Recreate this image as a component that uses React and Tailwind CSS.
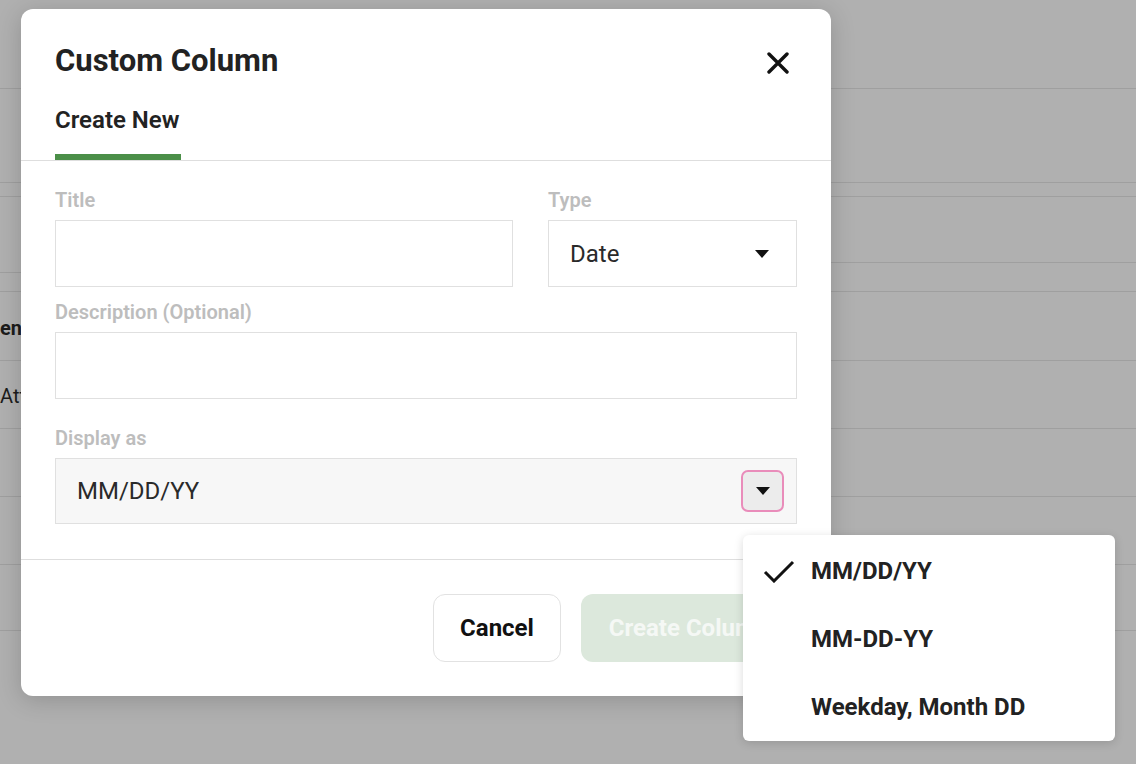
import React, { useState } from 'react'

const font = { fontFamily: 'Roboto, "Liberation Sans", sans-serif' }

function Caret() {
  return (
    <svg width="14" height="8" viewBox="0 0 14 8" className="shrink-0">
      <path d="M0 0h14L7 8z" fill="#111" />
    </svg>
  )
}

function Field({ label, children, className = '' }) {
  return (
    <div className={'flex flex-col ' + className}>
      <div className="h-[20px] mb-[10px] text-[20px] leading-[20px] font-semibold text-[#bdbdbd] whitespace-nowrap">{label}</div>
      {children}
    </div>
  )
}

const options = ['MM/DD/YY', 'MM-DD-YY', 'Weekday, Month DD']

export default function App() {
  const [format, setFormat] = useState('MM/DD/YY')
  const [open, setOpen] = useState(true)

  const leftRows = [89, 94, 14, 76, 19, 69, 68, 68, 68, 66]
  const rightRows = [89, 94, 14, 66, 29, 69, 68, 68, 68, 66]

  return (
    <div className="relative w-[1136px] h-[764px] overflow-hidden bg-[#b0b0b0]" style={font}>
      {/* dimmed page behind */}
      <div className="flex h-full">
        <div className="w-[21px] flex flex-col">
          {leftRows.map((h, i) => (
            <div key={i} style={{ height: h }} className="border-b border-[#9f9f9f] flex items-center whitespace-nowrap text-[20px] text-[#1c1c1c] pt-[3px]">
              {i === 5 && <span className="font-bold pl-[0px]">end</span>}
              {i === 6 && <span className="pl-[0px]">Att</span>}
            </div>
          ))}
        </div>
        <div className="flex-1 flex flex-col">
          {rightRows.map((h, i) => (
            <div key={i} style={{ height: h }} className="border-b border-[#9f9f9f]" />
          ))}
        </div>
      </div>

      {/* modal */}
      <div className="absolute left-[21px] top-[9px] w-[810px] h-[687px] bg-white rounded-[12px] shadow-[0_4px_24px_rgba(0,0,0,0.18)] flex flex-col">
        <div className="px-[34px] pt-[34px] flex items-center justify-between">
          <h2 className="text-[31px] leading-[36px] font-bold text-[#222]">Custom Column</h2>
          <button className="w-[22px] h-[22px] mr-[8px] mt-[4px]">
            <svg width="22" height="22" viewBox="0 0 22 22">
              <path d="M2 2L20 20M20 2L2 20" stroke="#111" strokeWidth="3.4" strokeLinecap="round" />
            </svg>
          </button>
        </div>

        <div className="border-b border-[#dedede] px-[34px] pt-[27px] flex">
          <div className="flex flex-col">
            <span className="text-[24px] leading-[28px] font-semibold text-[#222]">Create New</span>
            <div className="mt-[20px] h-[6px] w-[126px] bg-[#4b8f48]" />
          </div>
        </div>

        <div className="px-[34px] pt-[29px] flex flex-col">
          <div className="flex gap-[35px]">
            <Field label="Title" className="w-[458px]">
              <input className="h-[67px] border-[1.5px] border-[#e0e0e0] outline-none px-[20px] text-[24px]" />
            </Field>
            <Field label="Type" className="flex-1">
              <div className="h-[67px] border-[1.5px] border-[#e0e0e0] pl-[21px] pr-[27px] flex items-center justify-between">
                <span className="text-[24px] text-[#2a2a2a]">Date</span>
                <Caret />
              </div>
            </Field>
          </div>

          <Field label="Description (Optional)" className="mt-[15px]">
            <input className="h-[67px] border-[1.5px] border-[#e0e0e0] outline-none px-[20px] text-[24px]" />
          </Field>

          <Field label="Display as" className="mt-[29px]">
            <div className="h-[66px] border-[1.5px] border-[#e0e0e0] bg-[#f7f7f7] pl-[21px] pr-[12px] flex items-center justify-between">
              <span className="text-[24px] text-[#2a2a2a]">{format}</span>
              <button
                onClick={() => setOpen(!open)}
                className="w-[43px] h-[42px] rounded-[7px] border-2 border-[#e98cba] bg-[#ececec] flex items-center justify-center"
              >
                <Caret />
              </button>
            </div>
          </Field>
        </div>

        <div className="mt-[35px] border-t border-[#dedede] flex-1 px-[34px] pt-[34px] flex justify-end gap-[20px]">
          <button className="w-[128px] h-[68px] rounded-[12px] border border-[#e2e2e2] text-[24px] font-bold text-[#111]">Cancel</button>
          <button className="w-[216px] h-[68px] rounded-[12px] bg-[#dce8dc] text-[24px] font-bold text-[#f5f8f5] whitespace-nowrap">Create Column</button>
        </div>
      </div>

      {/* format menu */}
      {open && (
        <div className="absolute left-[743px] top-[535px] w-[372px] h-[206px] bg-white rounded-[6px] shadow-[0_2px_10px_rgba(0,0,0,0.15)] pt-[2px] flex flex-col">
          {options.map(o => (
            <div key={o} onClick={() => setFormat(o)} className="h-[68px] flex items-center cursor-pointer">
              <div className="w-[68px] flex justify-end pr-[16px]">
                {format === o && (
                  <svg width="32" height="23" viewBox="0 0 32 23">
                    <path d="M2 12L11 21L30 2" fill="none" stroke="#111" strokeWidth="3" />
                  </svg>
                )}
              </div>
              <span className="text-[24px] font-bold text-[#222]">{o}</span>
            </div>
          ))}
        </div>
      )}
    </div>
  )
}
